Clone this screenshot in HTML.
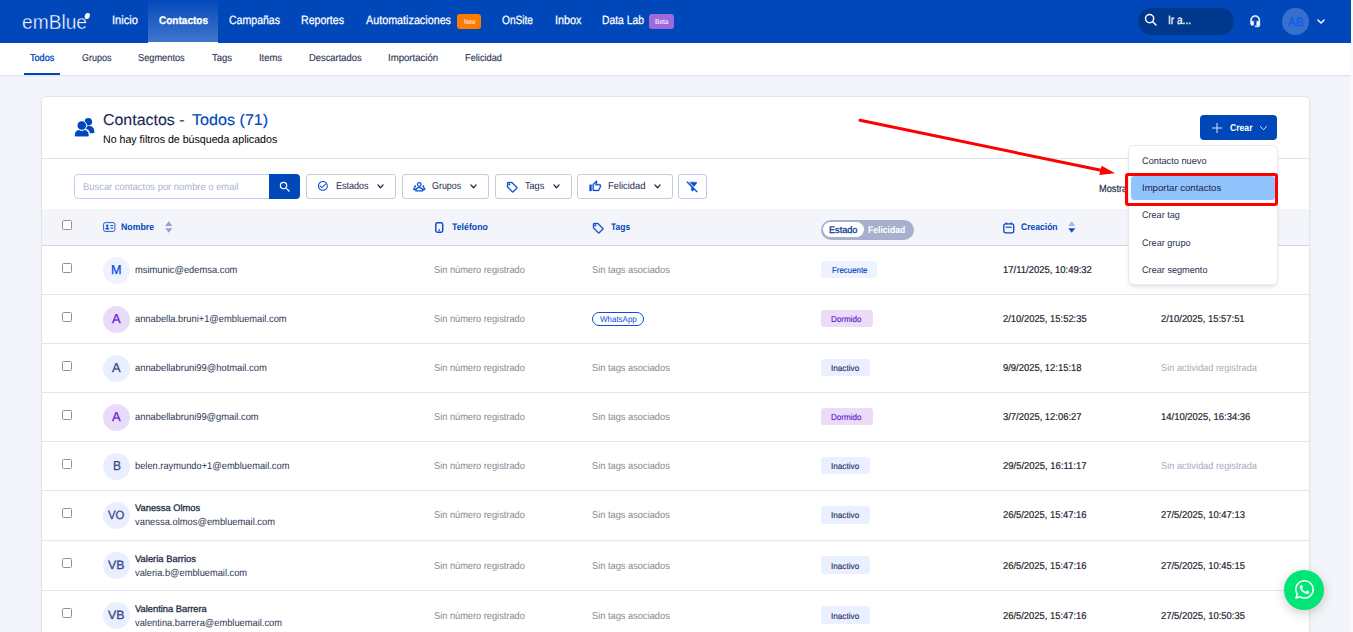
<!DOCTYPE html>
<html lang="es">
<head>
<meta charset="utf-8">
<title>emBlue - Contactos</title>
<style>
*{box-sizing:border-box;margin:0;padding:0}
html,body{width:1353px;height:632px;overflow:hidden;background:#F4F5FA;font-family:"Liberation Sans",sans-serif}
#page{position:relative;width:1353px;height:632px;overflow:hidden;background:#F4F5FA}
.abs{position:absolute}
.t{position:absolute;white-space:nowrap;line-height:1;display:inline-block;transform-origin:0 50%;text-rendering:geometricPrecision;font-family:"Liberation Sans",sans-serif}
.cb{position:absolute;left:62px;width:10px;height:10px;border:1px solid #929292;border-radius:1.5px;background:#fff}
.fbtn{position:absolute;top:174px;height:25px;border:1px solid #C7CCDB;border-radius:3px;background:#fff}
svg{position:absolute;overflow:visible}
</style>
</head>
<body>
<div id="page">

<!-- right edge strip -->
<div class="abs" style="left:1351px;top:0;width:2px;height:632px;background:#FAFAFC"></div>

<!-- top header -->
<div class="abs" style="left:0;top:0;width:1351px;height:43px;background:#0047BA"></div>
<!-- active tab -->
<div class="abs" style="left:148px;top:0;width:70px;height:42px;background:linear-gradient(180deg,rgba(255,255,255,0.02) 0%,rgba(255,255,255,0.25) 100%)"></div>
<div class="abs" style="left:148px;top:41.5px;width:70px;height:1.5px;background:#fff"></div>

<!-- logo -->
<svg style="left:0;top:0" width="110" height="42" viewBox="0 0 110 42">
  <text x="22" y="28.5" font-family="Liberation Sans, sans-serif" font-size="19.9" fill="#fff" stroke="#0047BA" stroke-width="0.4" paint-order="fill stroke" textLength="65" lengthAdjust="spacingAndGlyphs">emBlue</text>
  <ellipse cx="87.3" cy="16" rx="2.5" ry="3.1" fill="#fff" transform="rotate(20 87.3 16)"/>
</svg>

<!-- badges -->
<div class="abs" style="left:457px;top:14px;width:24px;height:15px;border-radius:3px;background:#FF7A00"></div>
<div class="abs" style="left:649px;top:14px;width:25px;height:15px;border-radius:3px;background:#9C6ADB"></div>

<!-- search pill -->
<div class="abs" style="left:1138px;top:8px;width:96px;height:27px;border-radius:14px;background:#00388E"></div>
<svg style="left:1144px;top:13px" width="13" height="13" viewBox="0 0 13 13" fill="none" stroke="#fff" stroke-width="1.5" stroke-linecap="round">
  <circle cx="5.6" cy="5.6" r="4.1"/><line x1="8.7" y1="8.7" x2="12" y2="12"/>
</svg>
<!-- headset -->
<svg style="left:1248.6px;top:15.2px" width="12.4" height="12.4" viewBox="0 0 24 24" fill="#fff" stroke="#fff" stroke-width="0.9">
  <path d="M12 1c-4.97 0-9 4.03-9 9v7c0 1.66 1.34 3 3 3h3v-8H5v-2c0-3.87 3.13-7 7-7s7 3.13 7 7v2h-4v8h4v1h-7v2h6c1.66 0 3-1.34 3-3V10c0-4.97-4.03-9-9-9z"/>
</svg>
<!-- avatar -->
<div class="abs" style="left:1282px;top:8px;width:26.5px;height:27px;border-radius:50%;background:#3670CF"></div>
<svg style="left:1316.5px;top:18.8px" width="8" height="5.3" viewBox="0 0 9 6" fill="none" stroke="#fff" stroke-width="1.6" stroke-linecap="round" stroke-linejoin="round">
  <polyline points="1,1 4.5,4.6 8,1"/>
</svg>

<!-- sub nav -->
<div class="abs" style="left:0;top:43px;width:1351px;height:32px;background:#fff"></div>
<div class="abs" style="left:0;top:75px;width:1351px;height:1px;background:#E2E4EC"></div>
<div class="abs" style="left:0;top:76px;width:1351px;height:1px;background:#EDEEF4"></div>
<div class="abs" style="left:24px;top:73px;width:36px;height:2px;background:#0047BA"></div>

<!-- card -->
<div class="abs" style="left:41px;top:96px;width:1269px;height:560px;background:#fff;border:1px solid #E3E5ED;border-radius:5px;box-shadow:0 1px 3px rgba(30,40,90,0.05)"></div>
<!-- people icon -->
<svg style="left:0;top:0" width="200" height="160" viewBox="0 0 200 160">
  <g fill="#0047BA">
    <circle cx="88.3" cy="121.8" r="3.8"/>
    <path d="M85.5 126.6 C88.5 125.6 91.6 126 92.7 127.2 C93.9 128.5 94.4 130.6 94.4 132.1 C94.4 132.9 94 133.3 93.2 133.3 L89.9 133.3 C89.6 131 88 129.2 85.5 128.6 Z"/>
  </g>
  <path fill="#0047BA" stroke="#fff" stroke-width="0.9" d="M74.4 135.2 C74.4 131.6 77 129.7 79 129.5 C79.8 130 80.8 130.3 81.8 130.3 C82.8 130.3 83.8 130 84.6 129.5 C86.6 129.7 89.2 131.6 89.2 135.2 C89.2 136.3 88.6 136.9 87.6 136.9 L76 136.9 C75 136.9 74.4 136.3 74.4 135.2 Z"/>
  <circle cx="81.8" cy="125.5" r="4.8" fill="#0047BA" stroke="#fff" stroke-width="1"/>
</svg>

<!-- crear button -->
<div class="abs" style="left:1200px;top:115px;width:77px;height:25px;border-radius:4px;background:#0047BA"></div>
<svg style="left:1212px;top:122.5px" width="10" height="10" viewBox="0 0 10 10" stroke="#C9DAF5" stroke-width="1.1"><line x1="5" y1="0" x2="5" y2="10"/><line x1="0" y1="5" x2="10" y2="5"/></svg>
<svg style="left:1260px;top:125.5px" width="7" height="4.5" viewBox="0 0 7 4.5" fill="none" stroke="#D5E2F7" stroke-width="1" stroke-linecap="round" stroke-linejoin="round"><polyline points="0.5,0.5 3.5,3.8 6.5,0.5"/></svg>

<!-- header divider -->
<div class="abs" style="left:42px;top:158px;width:1267px;height:1px;background:#E3E5ED"></div>

<!-- search input -->
<div class="abs" style="left:74px;top:174px;width:198px;height:25px;border:1px solid #BFD0EE;border-radius:4px 0 0 4px;background:#fff"></div>
<div class="abs" style="left:269px;top:174px;width:31px;height:25px;border-radius:0 4px 4px 0;background:#0047BA"></div>
<svg style="left:277.5px;top:180px" width="14" height="14" viewBox="0 0 24 24" fill="#fff"><path d="M15.5 14h-.79l-.28-.27A6.471 6.471 0 0 0 16 9.5 6.5 6.5 0 1 0 9.500 16c1.610 0 3.090-.590 4.230-1.570l.270.280v.790l5 4.990L20.490 19l-4.990-5zm-6 0C7.010 14 5 11.990 5 9.500S7.010 5 9.500 5 14 7.010 14 9.500 11.990 14 9.500 14z"/></svg>

<!-- filter buttons -->
<div class="fbtn" style="left:306px;width:89.5px"></div>
<div class="fbtn" style="left:402px;width:86.5px"></div>
<div class="fbtn" style="left:495px;width:76.5px"></div>
<div class="fbtn" style="left:577px;width:95.5px"></div>
<div class="fbtn" style="left:678px;width:28.5px;border-color:#B9CCEC"></div>
<!-- check circle -->
<svg style="left:316.9px;top:180.1px" width="11.8" height="11.8" viewBox="0 0 24 24" fill="#0B4FD0"><path d="M16.59 7.58L10 14.17l-3.590-3.580L5 12l5 5 8-8zM12 2C6.480 2 2 6.480 2 12s4.480 10 10 10 10-4.480 10-10S17.520 2 12 2zm0 18c-4.410 0-8-3.590-8-8s3.590-8 8-8 8 3.590 8 8-3.590 8-8 8z"/></svg>
<!-- groups icon -->
<svg style="left:413px;top:181.5px" width="12.5" height="10" viewBox="0 0 25 20" fill="none" stroke="#0B4FD0" stroke-width="2.5">
  <circle cx="12.5" cy="5" r="3.6"/>
  <path d="M5.500 17.500 C5.500 13 8 11.200 12.500 11.200 C17 11.200 19.500 13 19.500 17.500 Z" stroke-linejoin="round"/>
  <circle cx="4.200" cy="8.500" r="2" fill="#0B4FD0" stroke="none"/><circle cx="20.800" cy="8.500" r="2" fill="#0B4FD0" stroke="none"/>
  <path d="M1 15 C1 12.500 2.500 11.800 5 11.800 M24 15 C24 12.500 22.500 11.800 20 11.800 M1 15 L5 15 M20 15 L24 15"/>
</svg>
<!-- tag icon -->
<svg style="left:506px;top:180.5px" width="12.500" height="12.500" viewBox="0 0 24 24" fill="#0B4FD0" stroke="#0B4FD0" stroke-width="0.7"><path d="M21.410 11.580l-9-9C12.050 2.220 11.550 2 11 2H4c-1.100 0-2 .9-2 2v7c0 .550.220 1.050.590 1.420l9 9c.360.360.860.580 1.410.580s1.050-.220 1.410-.590l7-7c.370-.360.590-.860.590-1.410s-.230-1.060-.590-1.420zM13 20.010L4 11V4h7v-.010l9 9-7 7.020z"/><circle cx="6.500" cy="6.500" r="1.500"/></svg>
<!-- thumb icon -->
<svg style="left:589px;top:180px" width="12.500" height="12.500" viewBox="0 0 24 24" fill="#0B4FD0" stroke="#0B4FD0" stroke-width="0.6"><path d="M9 21h9c.830 0 1.540-.5 1.840-1.220l3.020-7.050c.090-.230.140-.470.140-.730v-2c0-1.100-.9-2-2-2h-6.310l.950-4.570.030-.320c0-.410-.170-.790-.440-1.060L14.170 1 7.580 7.590C7.220 7.950 7 8.450 7 9v10c0 1.100.9 2 2 2zM9 9l4.340-4.340L12 10h9v2l-3 7H9V9zM1 9h4v12H1z"/></svg>
<!-- filter off -->
<svg style="left:686px;top:180px" width="13" height="13" viewBox="0 0 24 24" fill="#0B4FD0" stroke="#0B4FD0" stroke-width="0.9" stroke-linejoin="round"><path d="M19.790 5.610C20.300 4.950 19.830 4 19 4H6.830l7.970 7.970 4.990-6.360zM2.810 2.810L1.390 4.220 10 13v6c0 .550.450 1 1 1h2c.550 0 1-.450 1-1v-2.170l5.780 5.780 1.410-1.410L2.810 2.810z"/></svg>
<!-- chevrons in filter buttons -->
<svg class="chev" style="left:377.4px;top:184.4px" width="7" height="4.8" viewBox="0 0 8 5.500" fill="none" stroke="#1E2B4F" stroke-width="1.500" stroke-linecap="round" stroke-linejoin="round"><polyline points="1,1 4,4.300 7,1"/></svg>
<svg class="chev" style="left:470.2px;top:184.4px" width="7" height="4.8" viewBox="0 0 8 5.500" fill="none" stroke="#1E2B4F" stroke-width="1.500" stroke-linecap="round" stroke-linejoin="round"><polyline points="1,1 4,4.300 7,1"/></svg>
<svg class="chev" style="left:552.9px;top:184.4px" width="7" height="4.8" viewBox="0 0 8 5.500" fill="none" stroke="#1E2B4F" stroke-width="1.500" stroke-linecap="round" stroke-linejoin="round"><polyline points="1,1 4,4.300 7,1"/></svg>
<svg class="chev" style="left:654.2px;top:184.4px" width="7" height="4.8" viewBox="0 0 8 5.500" fill="none" stroke="#1E2B4F" stroke-width="1.500" stroke-linecap="round" stroke-linejoin="round"><polyline points="1,1 4,4.300 7,1"/></svg>

<!-- table header -->
<div class="abs" style="left:42px;top:209px;width:1267px;height:36px;background:#F4F5FB"></div>
<div class="abs" style="left:42px;top:245px;width:1267px;height:1px;background:#D2D6E2"></div>
<div class="cb" style="top:220px"></div>
<!-- id card icon -->
<svg style="left:103px;top:222px" width="12.500" height="10" viewBox="0 0 25 20">
  <rect x="1.200" y="1.200" width="22.600" height="17.600" rx="3.500" fill="none" stroke="#1552C8" stroke-width="1.900"/>
  <circle cx="8.500" cy="7.500" r="2.400" fill="#0B4FD0"/><path d="M4.500 15 C4.500 11.800 6 11 8.500 11 C11 11 12.500 11.800 12.500 15 Z" fill="#0B4FD0"/>
  <rect x="15" y="6" width="5.500" height="2.200" fill="#0B4FD0"/><rect x="15" y="11" width="5.500" height="2.200" fill="#0B4FD0"/>
</svg>
<!-- sort nombre -->
<svg style="left:165px;top:221px" width="7.500" height="12" viewBox="0 0 7.500 12"><polygon points="3.750,0.200 7.300,5 0.200,5" fill="#95A0D2"/><polygon points="0.200,7.300 7.300,7.300 3.750,11.800" fill="#95A0D2"/></svg>
<!-- phone icon -->
<svg style="left:435px;top:222px" width="8.500" height="11" viewBox="0 0 8.500 11"><rect x="0.800" y="0.800" width="6.900" height="9.400" rx="1.600" fill="none" stroke="#0B4FD0" stroke-width="1.500"/><rect x="3.500" y="7.300" width="1.500" height="1.600" fill="#0B4FD0"/></svg>
<!-- tag icon header -->
<svg style="left:592px;top:221.500px" width="12.500" height="12.500" viewBox="0 0 24 24" fill="#0B4FD0" stroke="#0B4FD0" stroke-width="0.7"><path d="M21.410 11.580l-9-9C12.050 2.220 11.550 2 11 2H4c-1.100 0-2 .9-2 2v7c0 .550.220 1.050.590 1.420l9 9c.360.360.860.580 1.410.580s1.050-.220 1.410-.590l7-7c.370-.360.590-.860.590-1.410s-.230-1.060-.590-1.420zM13 20.010L4 11V4h7v-.010l9 9-7 7.020z"/><circle cx="6.500" cy="6.500" r="1.500"/></svg>
<!-- estado toggle -->
<div class="abs" style="left:821px;top:220px;width:93px;height:20px;border-radius:10px;background:#A7B0CC"></div>
<div class="abs" style="left:823px;top:222.300px;width:40.500px;height:15px;border-radius:8px;background:#fff"></div>
<!-- calendar icon -->
<svg style="left:1002.700px;top:221.700px" width="11.600" height="11.600" viewBox="0 0 11.600 11.600" fill="none" stroke="#0647C0" stroke-width="1.300">
  <rect x="0.800" y="1.900" width="9.900" height="8.900" rx="1.600"/><line x1="3.300" y1="0.400" x2="3.300" y2="2.400"/><line x1="8.200" y1="0.400" x2="8.200" y2="2.400"/><line x1="2.600" y1="5.200" x2="8.900" y2="5.200" stroke-width="1.100"/>
</svg>
<!-- sort creacion -->
<svg style="left:1067.500px;top:221px" width="7.500" height="12" viewBox="0 0 7.500 12"><polygon points="3.750,0.200 7.300,5 0.200,5" fill="#A9B5E0"/><polygon points="0.200,7.300 7.300,7.300 3.750,11.800" fill="#0B4FD0"/></svg>

<div style="position:absolute;left:42px;top:294px;width:1267px;height:1px;background:#E4E6ED"></div>
<div class="cb" style="top:263.0px"></div>
<div style="position:absolute;left:103px;top:256.5px;width:27px;height:27px;border-radius:50%;background:#EEF3FF"></div>
<div style="position:absolute;left:821px;top:260.9px;width:56.0px;height:17.2px;border-radius:3px;background:#EEF3FF"></div>
<div style="position:absolute;left:42px;top:343px;width:1267px;height:1px;background:#E4E6ED"></div>
<div class="cb" style="top:312.0px"></div>
<div style="position:absolute;left:103px;top:305.5px;width:27px;height:27px;border-radius:50%;background:#E9DCFA"></div>
<div style="position:absolute;left:592px;top:311.9px;width:52px;height:14.4px;border:1px solid #0B4FD8;border-radius:8px"></div>
<div style="position:absolute;left:821px;top:309.9px;width:51.8px;height:17.2px;border-radius:3px;background:#EBDDF8"></div>
<div style="position:absolute;left:42px;top:392px;width:1267px;height:1px;background:#E4E6ED"></div>
<div class="cb" style="top:361.0px"></div>
<div style="position:absolute;left:103px;top:354.5px;width:27px;height:27px;border-radius:50%;background:#EAEFFF"></div>
<div style="position:absolute;left:821px;top:358.9px;width:49.0px;height:17.2px;border-radius:3px;background:#EAF0FF"></div>
<div style="position:absolute;left:42px;top:441px;width:1267px;height:1px;background:#E4E6ED"></div>
<div class="cb" style="top:410.0px"></div>
<div style="position:absolute;left:103px;top:403.5px;width:27px;height:27px;border-radius:50%;background:#E9DCFA"></div>
<div style="position:absolute;left:821px;top:407.9px;width:51.8px;height:17.2px;border-radius:3px;background:#EBDDF8"></div>
<div style="position:absolute;left:42px;top:490px;width:1267px;height:1px;background:#E4E6ED"></div>
<div class="cb" style="top:459.0px"></div>
<div style="position:absolute;left:103px;top:452.5px;width:27px;height:27px;border-radius:50%;background:#EAEFFF"></div>
<div style="position:absolute;left:821px;top:456.9px;width:49.0px;height:17.2px;border-radius:3px;background:#EAF0FF"></div>
<div style="position:absolute;left:42px;top:540px;width:1267px;height:1px;background:#E4E6ED"></div>
<div class="cb" style="top:508.0px"></div>
<div style="position:absolute;left:103px;top:502.0px;width:27px;height:27px;border-radius:50%;background:#EAEFFF"></div>
<div style="position:absolute;left:821px;top:506.4px;width:49.0px;height:17.2px;border-radius:3px;background:#EAF0FF"></div>
<div style="position:absolute;left:42px;top:590px;width:1267px;height:1px;background:#E4E6ED"></div>
<div class="cb" style="top:558.0px"></div>
<div style="position:absolute;left:103px;top:552.0px;width:27px;height:27px;border-radius:50%;background:#EAEFFF"></div>
<div style="position:absolute;left:821px;top:556.4px;width:49.0px;height:17.2px;border-radius:3px;background:#EAF0FF"></div>
<div style="position:absolute;left:42px;top:640px;width:1267px;height:1px;background:#E4E6ED"></div>
<div class="cb" style="top:608.0px"></div>
<div style="position:absolute;left:103px;top:602.0px;width:27px;height:27px;border-radius:50%;background:#EAEFFF"></div>
<div style="position:absolute;left:821px;top:606.4px;width:49.0px;height:17.2px;border-radius:3px;background:#EAF0FF"></div>
<span class="t" style="left:1098.8px;top:185px;font-size:10.3px;font-weight:400;color:#27314F;transform:scaleX(0.8981);-webkit-text-stroke:0.2px #27314F;">Mostrando</span>

<!-- dropdown menu -->
<div class="abs" style="left:1127.500px;top:145px;width:150px;height:139.500px;border-radius:6px;background:#fff;border:1px solid #E9EBF1;box-shadow:0 3px 5px -2px rgba(40,50,90,0.22)"></div>
<div class="abs" style="left:1131px;top:176px;width:144px;height:24px;border-radius:3px;background:#91C3FD"></div>
<div class="abs" style="left:1125px;top:173px;width:153px;height:33px;border:3px solid #FF0000;border-radius:3px"></div>

<!-- red arrow -->
<svg style="left:0;top:0" width="1353" height="632" viewBox="0 0 1353 632">
  <line x1="860" y1="120.300" x2="1101" y2="170.300" stroke="#FF0000" stroke-width="3" stroke-linecap="round"/>
  <polygon points="1115,173.200 1101.600,165.800 1099.300,175" fill="#FF0000"/>
</svg>

<!-- whatsapp fab -->
<div class="abs" style="left:1284px;top:570px;width:40px;height:40px;border-radius:50%;background:#00E676;box-shadow:0 3px 12px rgba(0,0,0,0.20)"></div>
<svg style="left:1294.800px;top:579.800px" width="19" height="19" viewBox="0 0 24 24" fill="#fff"><path d="M17.472 14.382c-.297-.149-1.758-.867-2.030-.967-.273-.099-.471-.148-.670.150-.197.297-.767.966-.940 1.164-.173.199-.347.223-.644.075-.297-.150-1.255-.463-2.390-1.475-.883-.788-1.480-1.761-1.653-2.059-.173-.297-.018-.458.130-.606.134-.133.298-.347.446-.520.149-.174.198-.298.298-.497.099-.198.050-.371-.025-.520-.075-.149-.669-1.612-.916-2.207-.242-.579-.487-.5-.669-.510-.173-.008-.371-.010-.570-.010-.198 0-.520.074-.792.372-.272.297-1.040 1.016-1.040 2.479 0 1.462 1.065 2.875 1.213 3.074.149.198 2.096 3.200 5.077 4.487.709.306 1.262.489 1.694.625.712.227 1.360.195 1.871.118.571-.085 1.758-.719 2.006-1.413.248-.694.248-1.289.173-1.413-.074-.124-.272-.198-.570-.347m-5.421 7.403h-.004a9.870 9.870 0 01-5.031-1.378l-.361-.214-3.741.982.998-3.648-.235-.374a9.860 9.860 0 01-1.510-5.260c.001-5.450 4.436-9.884 9.888-9.884 2.640 0 5.122 1.030 6.988 2.898a9.825 9.825 0 012.893 6.994c-.003 5.450-4.437 9.884-9.885 9.884m8.413-18.297A11.815 11.815 0 0012.050 0C5.495 0 .160 5.335.157 11.892c0 2.096.547 4.142 1.588 5.945L.057 24l6.305-1.654a11.882 11.882 0 005.683 1.448h.005c6.554 0 11.890-5.335 11.893-11.893a11.821 11.821 0 00-3.480-8.413z"/></svg>

<span class="t" style="left:112.0px;top:14px;font-size:12px;font-weight:400;color:#fff;transform:scaleX(0.9281);-webkit-text-stroke:0.25px #fff;">Inicio</span>
<span class="t" style="left:159.0px;top:16px;font-size:11px;font-weight:700;color:#fff;transform:scaleX(0.9111);-webkit-text-stroke:0.3px #fff;">Contactos</span>
<span class="t" style="left:229.0px;top:14px;font-size:12px;font-weight:400;color:#fff;transform:scaleX(0.8788);-webkit-text-stroke:0.25px #fff;">Campañas</span>
<span class="t" style="left:301.0px;top:14px;font-size:12px;font-weight:400;color:#fff;transform:scaleX(0.8829);-webkit-text-stroke:0.25px #fff;">Reportes</span>
<span class="t" style="left:366.0px;top:14px;font-size:12px;font-weight:400;color:#fff;transform:scaleX(0.8974);-webkit-text-stroke:0.25px #fff;">Automatizaciones</span>
<span class="t" style="left:502.0px;top:14px;font-size:12px;font-weight:400;color:#fff;transform:scaleX(0.8450);-webkit-text-stroke:0.25px #fff;">OnSite</span>
<span class="t" style="left:554.5px;top:14px;font-size:12px;font-weight:400;color:#fff;transform:scaleX(0.9026);-webkit-text-stroke:0.25px #fff;">Inbox</span>
<span class="t" style="left:602.0px;top:14px;font-size:12px;font-weight:400;color:#fff;transform:scaleX(0.8624);-webkit-text-stroke:0.25px #fff;">Data Lab</span>
<span class="t" style="left:463.5px;top:19px;font-size:7px;font-weight:400;color:#fff;transform:scaleX(0.8205);">New</span>
<span class="t" style="left:655.0px;top:19px;font-size:7px;font-weight:400;color:#fff;transform:scaleX(0.9371);">Beta</span>
<span class="t" style="left:1168.0px;top:14px;font-size:12px;font-weight:400;color:#fff;transform:scaleX(0.8411);-webkit-text-stroke:0.25px #fff;">Ir a...</span>
<span class="t" style="left:1287.8px;top:16px;font-size:12px;font-weight:400;color:#0F5CEA;transform:scaleX(0.9616);-webkit-text-stroke:0.4px #0F5CEA;">AB</span>
<span class="t" style="left:30.0px;top:54px;font-size:10px;font-weight:400;color:#0047BA;transform:scaleX(0.9105);-webkit-text-stroke:0.3px #0047BA;">Todos</span>
<span class="t" style="left:81.6px;top:54px;font-size:10px;font-weight:400;color:#2F3857;transform:scaleX(0.8964);-webkit-text-stroke:0.15px #2F3857;">Grupos</span>
<span class="t" style="left:138.0px;top:54px;font-size:10px;font-weight:400;color:#2F3857;transform:scaleX(0.9230);-webkit-text-stroke:0.15px #2F3857;">Segmentos</span>
<span class="t" style="left:212.0px;top:54px;font-size:10px;font-weight:400;color:#2F3857;transform:scaleX(0.9467);-webkit-text-stroke:0.15px #2F3857;">Tags</span>
<span class="t" style="left:259.0px;top:54px;font-size:10px;font-weight:400;color:#2F3857;transform:scaleX(0.9406);-webkit-text-stroke:0.15px #2F3857;">Items</span>
<span class="t" style="left:308.8px;top:54px;font-size:10px;font-weight:400;color:#2F3857;transform:scaleX(0.9369);-webkit-text-stroke:0.15px #2F3857;">Descartados</span>
<span class="t" style="left:388.2px;top:54px;font-size:10px;font-weight:400;color:#2F3857;transform:scaleX(0.9589);-webkit-text-stroke:0.15px #2F3857;">Importación</span>
<span class="t" style="left:465.4px;top:54px;font-size:10px;font-weight:400;color:#2F3857;transform:scaleX(0.9243);-webkit-text-stroke:0.15px #2F3857;">Felicidad</span>
<span class="t" style="left:103.4px;top:113px;font-size:15.6px;font-weight:400;color:#1C2C58;transform:scaleX(1.0219);-webkit-text-stroke:0.15px #1C2C58;">Contactos -</span>
<span class="t" style="left:191.8px;top:113px;font-size:15.6px;font-weight:400;color:#0047BA;transform:scaleX(1.0341);-webkit-text-stroke:0.15px #0047BA;">Todos (71)</span>
<span class="t" style="left:103.4px;top:135px;font-size:11px;font-weight:400;color:#000;transform:scaleX(0.9656);">No hay filtros de búsqueda aplicados</span>
<span class="t" style="left:1230.0px;top:124px;font-size:10px;font-weight:700;color:#fff;transform:scaleX(0.8607);">Crear</span>
<span class="t" style="left:1141.5px;top:157px;font-size:9.5px;font-weight:400;color:#27314F;transform:scaleX(0.9692);">Contacto nuevo</span>
<span class="t" style="left:1141.5px;top:184px;font-size:9.5px;font-weight:400;color:#1B2547;transform:scaleX(1.0067);">Importar contactos</span>
<span class="t" style="left:1141.5px;top:211px;font-size:9.5px;font-weight:400;color:#27314F;transform:scaleX(0.9543);">Crear tag</span>
<span class="t" style="left:1141.5px;top:239px;font-size:9.5px;font-weight:400;color:#27314F;transform:scaleX(0.9565);">Crear grupo</span>
<span class="t" style="left:1141.5px;top:266px;font-size:9.5px;font-weight:400;color:#27314F;transform:scaleX(0.9615);">Crear segmento</span>
<span class="t" style="left:82.7px;top:183px;font-size:10px;font-weight:400;color:#A8B2CF;transform:scaleX(0.9394);">Buscar contactos por nombre o email</span>
<span class="t" style="left:335.6px;top:182px;font-size:10px;font-weight:400;color:#1E2B4F;transform:scaleX(0.9020);">Estados</span>
<span class="t" style="left:431.8px;top:182px;font-size:10px;font-weight:400;color:#1E2B4F;transform:scaleX(0.8903);">Grupos</span>
<span class="t" style="left:524.8px;top:182px;font-size:10px;font-weight:400;color:#1E2B4F;transform:scaleX(0.9089);">Tags</span>
<span class="t" style="left:607.5px;top:182px;font-size:10px;font-weight:400;color:#1E2B4F;transform:scaleX(0.9368);">Felicidad</span>
<span class="t" style="left:121.2px;top:223px;font-size:9.5px;font-weight:700;color:#0047BA;transform:scaleX(0.9191);">Nombre</span>
<span class="t" style="left:451.9px;top:223px;font-size:9.5px;font-weight:700;color:#0047BA;transform:scaleX(0.9231);">Teléfono</span>
<span class="t" style="left:610.8px;top:223px;font-size:9.5px;font-weight:700;color:#0047BA;transform:scaleX(0.8943);">Tags</span>
<span class="t" style="left:828.8px;top:226px;font-size:9.5px;font-weight:400;color:#0B3A8E;transform:scaleX(0.9602);-webkit-text-stroke:0.3px #0B3A8E;">Estado</span>
<span class="t" style="left:868.0px;top:226px;font-size:9.5px;font-weight:700;color:#fff;transform:scaleX(0.9056);">Felicidad</span>
<span class="t" style="left:1020.6px;top:223px;font-size:9.5px;font-weight:700;color:#0047BA;transform:scaleX(0.9002);">Creación</span>
<span class="t" style="left:111.2px;top:263px;font-size:13px;font-weight:400;color:#0B4FD8;transform:scaleX(0.9683);-webkit-text-stroke:0.3px #0B4FD8;">M</span>
<span class="t" style="left:134.9px;top:266px;font-size:10px;font-weight:400;color:#2D3652;transform:scaleX(0.9341);">msimunic@edemsa.com</span>
<span class="t" style="left:433.5px;top:266px;font-size:10px;font-weight:400;color:#85878F;transform:scaleX(0.9229);">Sin número registrado</span>
<span class="t" style="left:592.4px;top:266px;font-size:10px;font-weight:400;color:#85878F;transform:scaleX(0.9267);">Sin tags asociados</span>
<span class="t" style="left:831.5px;top:266px;font-size:8.5px;font-weight:400;color:#0047BA;transform:scaleX(0.9273);-webkit-text-stroke:0.15px #0047BA;">Frecuente</span>
<span class="t" style="left:1002.7px;top:266px;font-size:10px;font-weight:400;color:#1F2330;transform:scaleX(0.9478);-webkit-text-stroke:0.2px #1F2330;">17/11/2025, 10:49:32</span>
<span class="t" style="left:112.2px;top:312px;font-size:13px;font-weight:400;color:#6A22D6;transform:scaleX(0.9917);-webkit-text-stroke:0.3px #6A22D6;">A</span>
<span class="t" style="left:134.9px;top:315px;font-size:10px;font-weight:400;color:#2D3652;transform:scaleX(0.9315);">annabella.bruni+1@embluemail.com</span>
<span class="t" style="left:433.5px;top:315px;font-size:10px;font-weight:400;color:#85878F;transform:scaleX(0.9229);">Sin número registrado</span>
<span class="t" style="left:600.0px;top:315px;font-size:8.5px;font-weight:400;color:#0B4FD8;transform:scaleX(0.9383);">WhatsApp</span>
<span class="t" style="left:831.4px;top:315px;font-size:8.5px;font-weight:400;color:#6519CF;transform:scaleX(0.9525);-webkit-text-stroke:0.15px #6519CF;">Dormido</span>
<span class="t" style="left:1002.7px;top:315px;font-size:10px;font-weight:400;color:#1F2330;transform:scaleX(0.9406);-webkit-text-stroke:0.2px #1F2330;">2/10/2025, 15:52:35</span>
<span class="t" style="left:1161.4px;top:315px;font-size:10px;font-weight:400;color:#1F2330;transform:scaleX(0.9395);-webkit-text-stroke:0.2px #1F2330;">2/10/2025, 15:57:51</span>
<span class="t" style="left:112.2px;top:361px;font-size:13px;font-weight:400;color:#3B4A86;transform:scaleX(0.9917);-webkit-text-stroke:0.3px #3B4A86;">A</span>
<span class="t" style="left:134.9px;top:364px;font-size:10px;font-weight:400;color:#2D3652;transform:scaleX(0.9354);">annabellabruni99@hotmail.com</span>
<span class="t" style="left:433.5px;top:364px;font-size:10px;font-weight:400;color:#85878F;transform:scaleX(0.9229);">Sin número registrado</span>
<span class="t" style="left:592.4px;top:364px;font-size:10px;font-weight:400;color:#85878F;transform:scaleX(0.9267);">Sin tags asociados</span>
<span class="t" style="left:831.4px;top:364px;font-size:8.5px;font-weight:400;color:#27325E;transform:scaleX(0.9626);-webkit-text-stroke:0.15px #27325E;">Inactivo</span>
<span class="t" style="left:1002.7px;top:364px;font-size:10px;font-weight:400;color:#1F2330;transform:scaleX(0.9410);-webkit-text-stroke:0.2px #1F2330;">9/9/2025, 12:15:18</span>
<span class="t" style="left:1161.4px;top:364px;font-size:10px;font-weight:400;color:#A7ACBB;transform:scaleX(0.9235);">Sin actividad registrada</span>
<span class="t" style="left:112.2px;top:410px;font-size:13px;font-weight:400;color:#6A22D6;transform:scaleX(0.9917);-webkit-text-stroke:0.3px #6A22D6;">A</span>
<span class="t" style="left:134.9px;top:413px;font-size:10px;font-weight:400;color:#2D3652;transform:scaleX(0.9332);">annabellabruni99@gmail.com</span>
<span class="t" style="left:433.5px;top:413px;font-size:10px;font-weight:400;color:#85878F;transform:scaleX(0.9229);">Sin número registrado</span>
<span class="t" style="left:592.4px;top:413px;font-size:10px;font-weight:400;color:#85878F;transform:scaleX(0.9267);">Sin tags asociados</span>
<span class="t" style="left:831.4px;top:413px;font-size:8.5px;font-weight:400;color:#6519CF;transform:scaleX(0.9525);-webkit-text-stroke:0.15px #6519CF;">Dormido</span>
<span class="t" style="left:1002.7px;top:413px;font-size:10px;font-weight:400;color:#1F2330;transform:scaleX(0.9410);-webkit-text-stroke:0.2px #1F2330;">3/7/2025, 12:06:27</span>
<span class="t" style="left:1161.4px;top:413px;font-size:10px;font-weight:400;color:#1F2330;transform:scaleX(0.9447);-webkit-text-stroke:0.2px #1F2330;">14/10/2025, 16:34:36</span>
<span class="t" style="left:112.5px;top:459px;font-size:13px;font-weight:400;color:#3B4A86;transform:scaleX(0.9225);-webkit-text-stroke:0.3px #3B4A86;">B</span>
<span class="t" style="left:134.9px;top:462px;font-size:10px;font-weight:400;color:#2D3652;transform:scaleX(0.9297);">belen.raymundo+1@embluemail.com</span>
<span class="t" style="left:433.5px;top:462px;font-size:10px;font-weight:400;color:#85878F;transform:scaleX(0.9229);">Sin número registrado</span>
<span class="t" style="left:592.4px;top:462px;font-size:10px;font-weight:400;color:#85878F;transform:scaleX(0.9267);">Sin tags asociados</span>
<span class="t" style="left:831.4px;top:462px;font-size:8.5px;font-weight:400;color:#27325E;transform:scaleX(0.9626);-webkit-text-stroke:0.15px #27325E;">Inactivo</span>
<span class="t" style="left:1002.7px;top:462px;font-size:10px;font-weight:400;color:#1F2330;transform:scaleX(0.9463);-webkit-text-stroke:0.2px #1F2330;">29/5/2025, 16:11:17</span>
<span class="t" style="left:1161.4px;top:462px;font-size:10px;font-weight:400;color:#A7ACBB;transform:scaleX(0.9235);">Sin actividad registrada</span>
<span class="t" style="left:108.4px;top:509px;font-size:12px;font-weight:400;color:#3B4A86;transform:scaleX(0.9456);-webkit-text-stroke:0.3px #3B4A86;">VO</span>
<span class="t" style="left:134.9px;top:504px;font-size:9.5px;font-weight:400;color:#232B45;transform:scaleX(0.9810);-webkit-text-stroke:0.3px #232B45;">Vanessa Olmos</span>
<span class="t" style="left:134.9px;top:518px;font-size:10px;font-weight:400;color:#2D3652;transform:scaleX(0.9355);">vanessa.olmos@embluemail.com</span>
<span class="t" style="left:433.5px;top:511px;font-size:10px;font-weight:400;color:#85878F;transform:scaleX(0.9229);">Sin número registrado</span>
<span class="t" style="left:592.4px;top:511px;font-size:10px;font-weight:400;color:#85878F;transform:scaleX(0.9267);">Sin tags asociados</span>
<span class="t" style="left:831.4px;top:511px;font-size:8.5px;font-weight:400;color:#27325E;transform:scaleX(0.9626);-webkit-text-stroke:0.15px #27325E;">Inactivo</span>
<span class="t" style="left:1002.7px;top:511px;font-size:10px;font-weight:400;color:#1F2330;transform:scaleX(0.9384);-webkit-text-stroke:0.2px #1F2330;">26/5/2025, 15:47:16</span>
<span class="t" style="left:1161.4px;top:511px;font-size:10px;font-weight:400;color:#1F2330;transform:scaleX(0.9429);-webkit-text-stroke:0.2px #1F2330;">27/5/2025, 10:47:13</span>
<span class="t" style="left:108.4px;top:559px;font-size:12px;font-weight:400;color:#3B4A86;transform:scaleX(1.0240);-webkit-text-stroke:0.3px #3B4A86;">VB</span>
<span class="t" style="left:134.9px;top:555px;font-size:9.5px;font-weight:400;color:#232B45;transform:scaleX(0.9885);-webkit-text-stroke:0.3px #232B45;">Valeria Barrios</span>
<span class="t" style="left:134.9px;top:569px;font-size:10px;font-weight:400;color:#2D3652;transform:scaleX(0.9282);">valeria.b@embluemail.com</span>
<span class="t" style="left:433.5px;top:562px;font-size:10px;font-weight:400;color:#85878F;transform:scaleX(0.9229);">Sin número registrado</span>
<span class="t" style="left:592.4px;top:562px;font-size:10px;font-weight:400;color:#85878F;transform:scaleX(0.9267);">Sin tags asociados</span>
<span class="t" style="left:831.4px;top:562px;font-size:8.5px;font-weight:400;color:#27325E;transform:scaleX(0.9626);-webkit-text-stroke:0.15px #27325E;">Inactivo</span>
<span class="t" style="left:1002.7px;top:562px;font-size:10px;font-weight:400;color:#1F2330;transform:scaleX(0.9384);-webkit-text-stroke:0.2px #1F2330;">26/5/2025, 15:47:16</span>
<span class="t" style="left:1161.4px;top:562px;font-size:10px;font-weight:400;color:#1F2330;transform:scaleX(0.9429);-webkit-text-stroke:0.2px #1F2330;">27/5/2025, 10:45:15</span>
<span class="t" style="left:108.4px;top:609px;font-size:12px;font-weight:400;color:#3B4A86;transform:scaleX(1.0240);-webkit-text-stroke:0.3px #3B4A86;">VB</span>
<span class="t" style="left:134.9px;top:605px;font-size:9.5px;font-weight:400;color:#232B45;transform:scaleX(0.9804);-webkit-text-stroke:0.3px #232B45;">Valentina Barrera</span>
<span class="t" style="left:134.9px;top:619px;font-size:10px;font-weight:400;color:#2D3652;transform:scaleX(0.9304);">valentina.barrera@embluemail.com</span>
<span class="t" style="left:433.5px;top:612px;font-size:10px;font-weight:400;color:#85878F;transform:scaleX(0.9229);">Sin número registrado</span>
<span class="t" style="left:592.4px;top:612px;font-size:10px;font-weight:400;color:#85878F;transform:scaleX(0.9267);">Sin tags asociados</span>
<span class="t" style="left:831.4px;top:612px;font-size:8.5px;font-weight:400;color:#27325E;transform:scaleX(0.9626);-webkit-text-stroke:0.15px #27325E;">Inactivo</span>
<span class="t" style="left:1002.7px;top:612px;font-size:10px;font-weight:400;color:#1F2330;transform:scaleX(0.9384);-webkit-text-stroke:0.2px #1F2330;">26/5/2025, 15:47:16</span>
<span class="t" style="left:1161.4px;top:612px;font-size:10px;font-weight:400;color:#1F2330;transform:scaleX(0.9429);-webkit-text-stroke:0.2px #1F2330;">27/5/2025, 10:50:35</span>

</div>
</body>
</html>
